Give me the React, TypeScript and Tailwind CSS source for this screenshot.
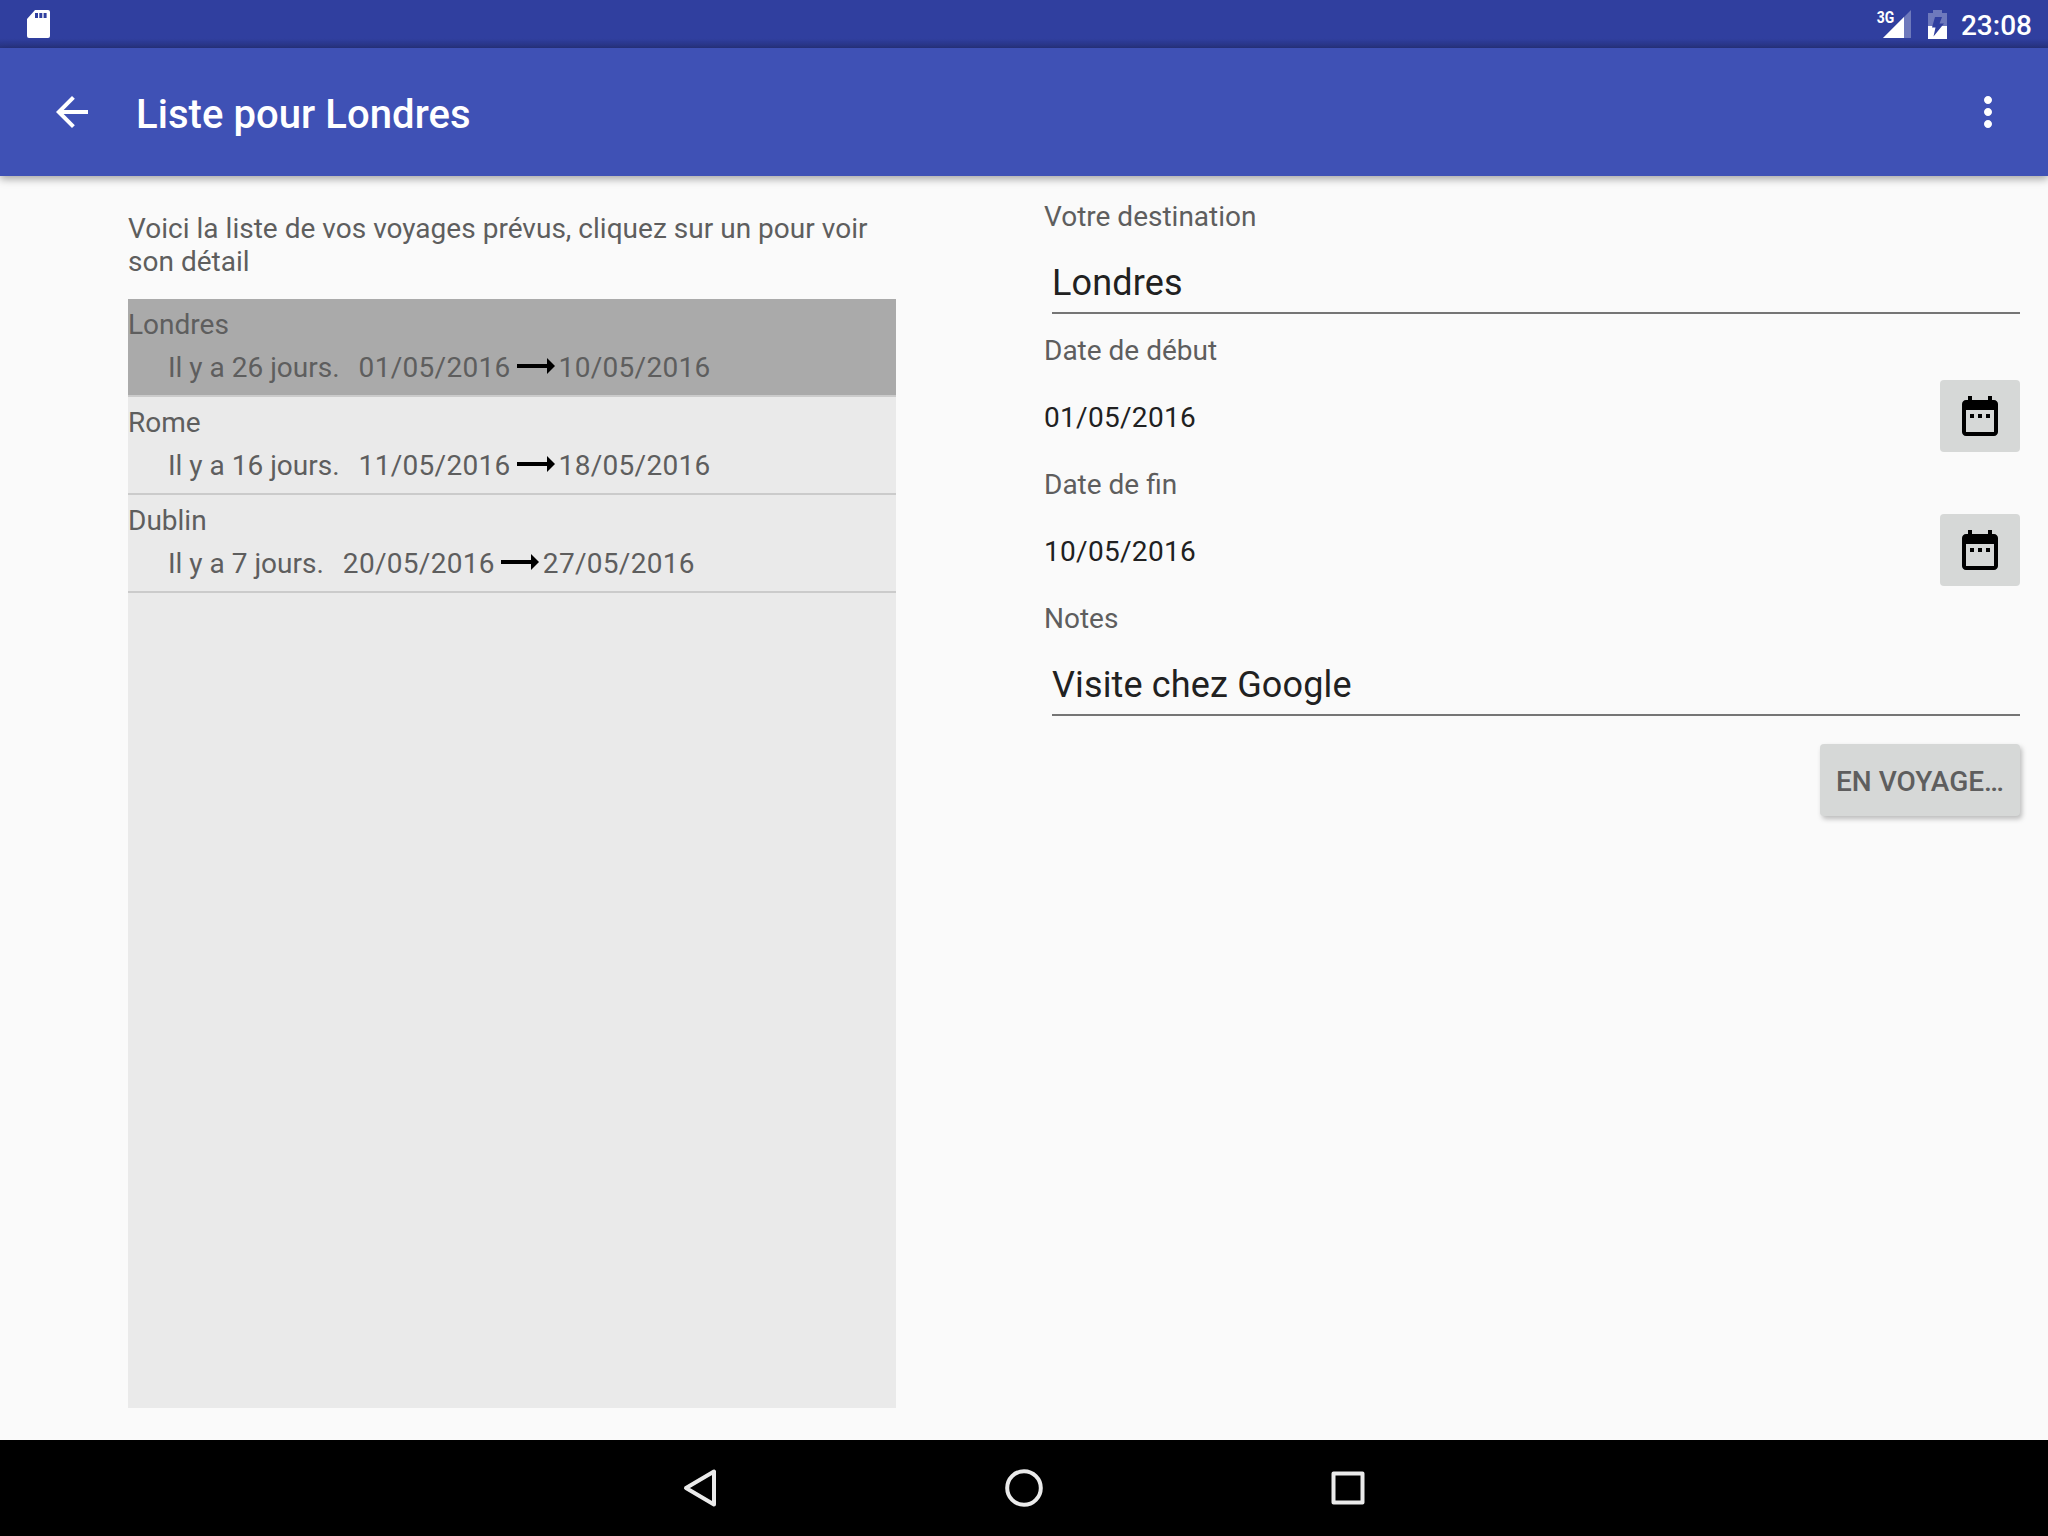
import React from "react";

type Trip = { city: string; ago: string; start: string; end: string; selected?: boolean };

const trips: Trip[] = [
  { city: "Londres", ago: "Il y a 26 jours.", start: "01/05/2016", end: "10/05/2016", selected: true },
  { city: "Rome", ago: "Il y a 16 jours.", start: "11/05/2016", end: "18/05/2016" },
  { city: "Dublin", ago: "Il y a 7 jours.", start: "20/05/2016", end: "27/05/2016" },
];

function StatusBar() {
  return (
    <div className="flex h-12 items-center justify-between bg-[#303f9f] bg-linear-to-b from-[#303f9f] from-80% to-[#273381] pr-4 pl-[26px] text-white">
      <svg className="h-7 w-6" viewBox="0 0 24 28" fill="#fff">
        <path fillRule="evenodd" d="M9 0H22a2 2 0 0 1 2 2V26a2 2 0 0 1-2 2H3a2 2 0 0 1-2-2V9L9 0ZM9 3v5h3V3ZM13.3 3v5h3V3ZM17.6 3v5h3V3Z" />
      </svg>
      <div className="flex h-full items-center">
        <div className="mb-[15px] origin-right scale-x-[0.82] text-[17px] leading-4 font-bold">3G</div>
        <svg className="-ml-[11px] h-7 w-7" viewBox="0 0 28 28">
          <path d="M28 0V28H0Z" fill="#fff" fillOpacity=".3" />
          <path d="M21 7V28H0Z" fill="#fff" />
        </svg>
        <svg className="ml-[17px] h-[29px] w-[19px]" viewBox="0 0 19 29">
          <path d="M0 3H5V0H14V3H19V16H0Z" fill="#fff" fillOpacity=".3" />
          <path d="M0 16H19V29H0Z" fill="#fff" />
          <path d="M7 7H14L11.5 13.5H16L5.500 26.500L7.500 17.500H4Z" fill="#303f9f" />
        </svg>
        <div className="ml-[14px] pt-1 text-[28px] leading-8 font-medium">23:08</div>
      </div>
    </div>
  );
}

function AppBar() {
  return (
    <div className="relative flex h-32 items-center bg-[#3f51b5] pr-9 pl-12 text-white shadow-[0_3px_8px_rgba(0,0,0,0.35)]">
      <svg className="size-12" viewBox="0 0 24 24" fill="#fff">
        <path d="M20 11H7.830l5.590-5.590L12 4l-8 8 8 8 1.410-1.410L7.830 13H20v-2z" />
      </svg>
      <div className="ml-10 flex-1 pt-1.5 text-[40px] leading-12 font-medium tracking-[0.07px]">Liste pour Londres</div>
      <svg className="size-12" viewBox="0 0 24 24" fill="#fff">
        <path d="M12 8c1.100 0 2-.9 2-2s-.9-2-2-2-2 .9-2 2 .9 2 2 2zm0 2c-1.100 0-2 .9-2 2s.9 2 2 2 2-.9 2-2-.9-2-2-2zm0 6c-1.100 0-2 .9-2 2s.9 2 2 2 2-.9 2-2-.9-2-2-2z" />
      </svg>
    </div>
  );
}

function TripRow({ trip }: { trip: Trip }) {
  return (
    <div className={"h-[98px] border-b-2 border-[#cbcbcb] " + (trip.selected ? "bg-[#aaaaaa]" : "bg-[#eaeaea]")}>
      <div className="pt-[9px] leading-[33px]">{trip.city}</div>
      <div className="mt-2.5 flex items-center pl-10 leading-[33px]">
        <span>{trip.ago}</span>
        <span className="ml-[19px] tracking-[0.3px]">{trip.start}</span>
        <svg className="mr-1 mb-[3px] ml-1.5 h-4 w-[38px]" viewBox="0 0 38 16" fill="#000">
          <path d="M0 6H30V0L38 8L30 16V10H0Z" />
        </svg>
        <span className="tracking-[0.3px]">{trip.end}</span>
      </div>
    </div>
  );
}

function DateRow({ label, value }: { label: string; value: string }) {
  return (
    <div className="flex h-[134px] flex-col">
      <div className="h-[60px] pt-3.5 leading-[33px]">{label}</div>
      <div className="flex items-center justify-between text-[#212121]">
        <span className="pt-0.5 leading-[33px] tracking-[0.3px]">{value}</span>
        <button className="flex h-[72px] w-20 items-center justify-center rounded bg-[#d6d8d7]">
          <svg className="size-12" viewBox="0 0 24 24" fill="#000">
            <path d="M9 11H7v2h2v-2zm4 0h-2v2h2v-2zm4 0h-2v2h2v-2zm2-7h-1V2h-2v2H8V2H6v2H5c-1.110 0-1.990.9-1.990 2L3 20c0 1.100.89 2 2 2h14c1.100 0 2-.9 2-2V6c0-1.100-.9-2-2-2zm0 16H5V9h14v11z" />
          </svg>
        </button>
      </div>
    </div>
  );
}

function TextField({ label, value }: { label: string; value: string }) {
  return (
    <div>
      <div className="leading-[33px]">{label}</div>
      <div className="mt-7 ml-2 h-[53px] border-b-2 border-[#757575] pt-px text-[36px] leading-[42px] tracking-[0.15px] text-[#212121]">
        {value}
      </div>
    </div>
  );
}

export default function App() {
  return (
    <div className="flex h-[1536px] w-[2048px] flex-col overflow-hidden bg-[#fafafa] font-['Roboto',sans-serif] text-[28px] text-[#5e5e5e]">
      <StatusBar />
      <AppBar />
      <main className="flex flex-1">
        <section className="mb-8 ml-32 flex w-[768px] flex-col pt-9">
          <p className="h-[87px] leading-[33px] tracking-[0.02px]">
            Voici la liste de vos voyages prévus, cliquez sur un pour voir son détail
          </p>
          <div className="flex-1 bg-[#eaeaea]">
            {trips.map((t) => (
              <TripRow key={t.city} trip={t} />
            ))}
          </div>
        </section>
        <section className="mr-7 ml-[148px] flex flex-1 flex-col pt-6">
          <TextField label="Votre destination" value="Londres" />
          <div className="pt-1.5">
            <DateRow label="Date de début" value="01/05/2016" />
            <DateRow label="Date de fin" value="10/05/2016" />
          </div>
          <div className="pt-3.5">
            <TextField label="Notes" value="Visite chez Google" />
          </div>
          <button className="mt-7 flex h-[72px] w-[200px] items-center self-end rounded bg-[#d6d8d7] pt-1 pl-4 font-medium shadow-[2px_3px_5px_rgba(0,0,0,0.25)]">
            EN VOYAGE…
          </button>
        </section>
      </main>
      <nav className="flex h-24 items-center justify-center gap-[276px] bg-black">
        <svg className="size-12" viewBox="0 0 48 48" fill="none" stroke="#ebebeb" strokeWidth="4" strokeLinejoin="round">
          <path d="M38 7.500V40.500L10 24Z" />
        </svg>
        <svg className="size-12" viewBox="0 0 48 48" fill="none" stroke="#ebebeb" strokeWidth="4">
          <circle cx="24" cy="24" r="16.800" />
        </svg>
        <svg className="size-12" viewBox="0 0 48 48" fill="none" stroke="#ebebeb" strokeWidth="4" strokeLinejoin="round">
          <path d="M9.500 9.500H38.500V38.500H9.500Z" />
        </svg>
      </nav>
    </div>
  );
}
